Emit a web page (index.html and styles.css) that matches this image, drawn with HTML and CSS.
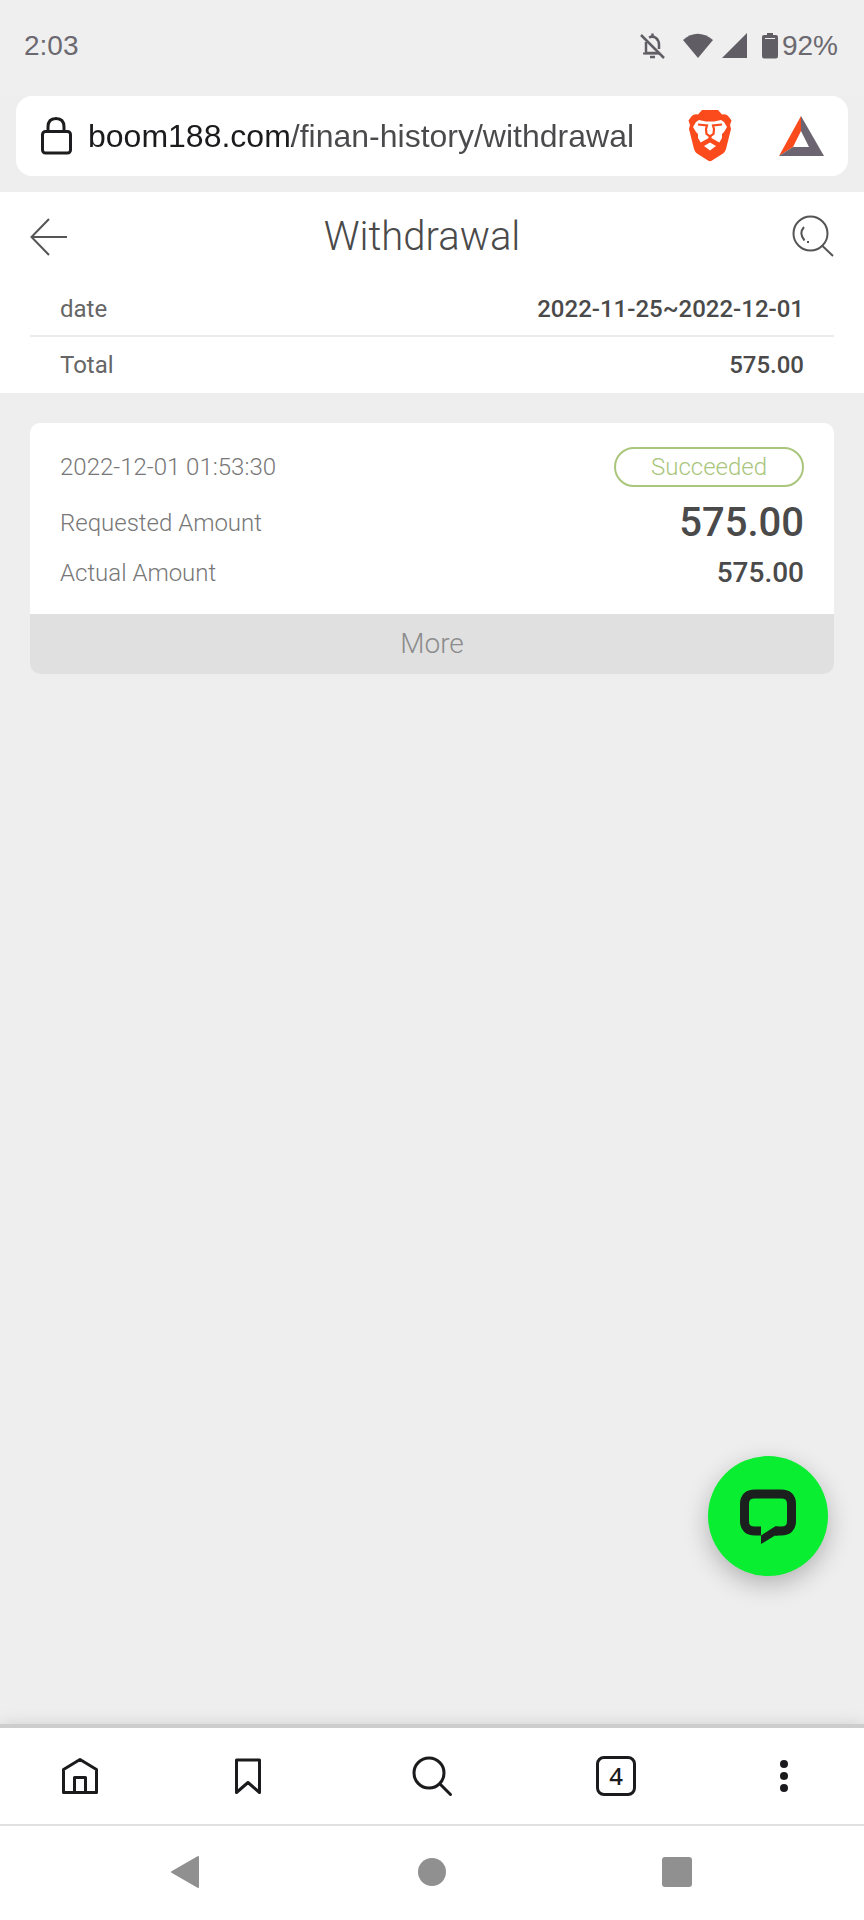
FILE: index.html
```html
<!DOCTYPE html>
<html lang="en">
<head>
  <meta charset="UTF-8" />
  <title>Withdrawal</title>
  <meta name="viewport" content="width=device-width, initial-scale=1" />
  <link rel="stylesheet" href="styles.css">
</head>
<body>
  <div class="status-bar">
    <span class="clock">2:03</span>
    <div class="status-icons">
      <svg width="44" height="28" viewBox="0 0 44 28" fill="none" stroke="#605e64" stroke-width="2.500">
        <path d="M5 3 L28 26" />
        <path d="M13 5.500 Q17 3.500 20 6 Q23 8.500 23 13 V17" />
        <path d="M10 10 V21 H23" />
        <path d="M7 21.500 H24" stroke-width="2" />
        <path d="M16.500 1.500 V5 M14 25 H19" />
      </svg>
      <svg width="36" height="28" viewBox="0 0 36 28" fill="#605e64">
        <path d="M3 8 Q17.500 -4.500 33 8 L18 26 Z" />
      </svg>
      <svg width="36" height="28" viewBox="0 0 36 28" fill="#605e64">
        <path d="M6 26 L31 1 V26 Z" />
      </svg>
      <svg width="30" height="28" viewBox="0 0 30 28" fill="#605e64">
        <path d="M15 1 H21 V3 H24 Q26 3 26 5 V24 Q26 26.500 24 26.500 H12 Q10 26.500 10 24 V5 Q10 3 12 3 H15 Z" />
        <path d="M13 6.500 H23" stroke="#efefef" />
      </svg>
      <span>92%</span>
    </div>
  </div>

  <div class="address-bar">
    <svg width="32" height="38" viewBox="0 0 32 38" fill="none" stroke="#1d1d1f" stroke-width="3">
      <rect x="2.500" y="14.500" width="28" height="21.500" rx="3" />
      <path d="M8 14 V10 Q8 1.500 16 1.500 Q24 1.500 24 10 V14" />
    </svg>
    <input class="address" type="text" value="boom188.com/finan-history/withdrawal" aria-label="Address">
    <button class="icon-btn" aria-label="Shields">
      <svg width="44" height="52" viewBox="0 0 44 52">
        <path fill="#fb4a1b" d="M14 0 H30 L34 4.500 Q39 3.500 41 7 L43.500 10.500 L42 15 L43 19 L38 39 Q37 42 35 43.500 L24 50.500 Q22 52 20 50.500 L9 43.500 Q7 42 6 39 L1 19 L2 15 L0.500 10.500 L3 7 Q5 3.500 10 4.500 Z" />
        <path fill="#fff" d="M11 10 L18 11.500 H26 L33 10 L36 12 L39 17 L36 22 L34 24 V28 L31 33 L24 30 H20 L13 33 L10 28 V24 L8 22 L5 17 L8 12 Z" />
        <path fill="#fff" d="M16 36 L22 32.500 L28 36 L22 40.500 Z" />
        <path fill="none" stroke="#fb4a1b" stroke-width="2.200" d="M10 14.500 L19 15.500 L18 19 L18.500 24 L22 26.500 L25.500 24 L26 19 L25 15.500 L34 14.500" />
        <path fill="none" stroke="#fb4a1b" stroke-width="3" d="M22 25 V29.500 M13 34 L22 29 L31 34" />
      </svg>
    </button>
    <button class="icon-btn" aria-label="Rewards">
      <svg width="46" height="42" viewBox="0 0 46 42">
        <path fill="#fb4a1b" d="M23 1 V16 L15 32 L1 41 Z" />
        <path fill="#6c6470" d="M23 1 L46 41 L31 32 L23 16 Z M1 41 L15 32 H31 L46 41 Z" />
      </svg>
    </button>
  </div>

  <main class="page">
    <header class="page-header">
      <button class="icon-btn" aria-label="Back">
        <svg width="42" height="42" viewBox="0 0 42 42" fill="none" stroke="#555" stroke-width="2">
          <path d="M37 21 H2 M19 3 L1.500 21 L19 39" />
        </svg>
      </button>
      <h1>Withdrawal</h1>
      <button class="icon-btn" aria-label="Search records">
        <svg width="42" height="42" viewBox="0 0 42 42" fill="none" stroke="#555" stroke-width="2">
          <circle cx="18.500" cy="17.500" r="17" />
          <path d="M30 29.500 L41 40 M12 11 Q6.500 17.500 12.500 24.500 M15 26 H17" />
        </svg>
      </button>
    </header>

    <dl class="summary">
      <div class="summary-row">
        <dt>date</dt>
        <dd>2022-11-25~2022-12-01</dd>
      </div>
      <div class="summary-row">
        <dt>Total</dt>
        <dd>575.00</dd>
      </div>
    </dl>

    <section class="card">
      <div class="card-body">
        <div class="card-row">
          <span>2022-12-01 01:53:30</span>
          <span class="badge">Succeeded</span>
        </div>
        <div class="card-row">
          <span>Requested Amount</span>
          <strong class="amount-lg">575.00</strong>
        </div>
        <div class="card-row">
          <span>Actual Amount</span>
          <strong class="amount">575.00</strong>
        </div>
      </div>
      <button class="more">More</button>
    </section>

    <button class="chat" aria-label="Chat">
      <svg width="56" height="56" viewBox="0 0 56 56">
        <path fill="none" stroke="#1b1f1d" stroke-width="9" d="M21 43 H15 Q4.500 43 4.500 33 V16 Q4.500 6 15 6 H41 Q51.500 6 51.500 16 V33 Q51.500 43 41 43 H35" />
        <path fill="#1b1f1d" d="M21 38.500 V56 L35 47.500 H38 V38.500 H35 L21 47.500 Z" />
      </svg>
    </button>
  </main>

  <nav class="toolbar">
    <button class="icon-btn" aria-label="Home">
      <svg width="40" height="40" viewBox="0 0 40 40" fill="none" stroke="#1b1b1d" stroke-width="3" stroke-linejoin="round">
        <path d="M3.500 13.500 L20 3.500 L36.500 13.500 V36.500 H3.500 Z M14.500 36 V21.500 H25.500 V36" />
      </svg>
    </button>
    <button class="icon-btn" aria-label="Bookmarks">
      <svg width="40" height="40" viewBox="0 0 40 40" fill="none" stroke="#1b1b1d" stroke-width="3" stroke-linejoin="round">
        <path d="M8.500 4 H31.500 V36.500 L20 26.500 L8.500 36.500 Z" />
      </svg>
    </button>
    <button class="icon-btn" aria-label="Search">
      <svg width="40" height="40" viewBox="0 0 40 40" fill="none" stroke="#1b1b1d" stroke-width="3" stroke-linecap="round">
        <circle cx="17" cy="17" r="15" />
        <path d="M28 28 L38.500 38.500" />
      </svg>
    </button>
    <button class="tab-count" aria-label="4 open tabs">4</button>
    <button class="icon-btn" aria-label="Menu">
      <svg width="8" height="40" viewBox="0 0 8 40" fill="#1b1b1d">
        <circle cx="4" cy="8" r="4" />
        <circle cx="4" cy="20" r="4" />
        <circle cx="4" cy="32" r="4" />
      </svg>
    </button>
  </nav>

  <nav class="system-nav">
    <button class="icon-btn" aria-label="System back">
      <svg width="32" height="32" viewBox="0 0 32 32" fill="#909090" stroke="#909090" stroke-width="2" stroke-linejoin="round">
        <path d="M1 15 L27 0 V30 Z" />
      </svg>
    </button>
    <button class="icon-btn" aria-label="System home">
      <svg width="32" height="32" viewBox="0 0 32 32" fill="#909090">
        <circle cx="16" cy="15" r="14" />
      </svg>
    </button>
    <button class="icon-btn" aria-label="Recent apps">
      <svg width="32" height="32" viewBox="0 0 32 32" fill="#909090">
        <rect x="1" y="0" width="30" height="30" rx="3" />
      </svg>
    </button>
  </nav>
</body>
</html>
```

FILE: styles.css
```css
:root {
  --bg: #eeeeee;
  --text: #4a4a4a;
  --text-muted: #777;
  --ink: #1b1b1d;
  --success: #a9c67c;
}

* {
  box-sizing: border-box;
  margin: 0;
  padding: 0;
}

body {
  display: flex;
  flex-direction: column;
  min-height: 100vh;
  background: var(--bg);
  color: var(--text);
  font-family: Roboto, Arial, sans-serif;
  font-size: 24px;
}

button {
  border: none;
  background: none;
  font-family: inherit;
  cursor: pointer;
}

svg {
  display: block;
  overflow: visible;
}

.icon-btn {
  display: flex;
  align-items: center;
  justify-content: center;
}

/* Phone status bar and address bar */
.status-bar {
  display: flex;
  align-items: center;
  justify-content: space-between;
  height: 96px;
  padding: 0 26px 4px 24px;
  background: #efefef;
  color: #6b696f;
  font-family: "Liberation Sans", Arial, sans-serif;
  font-size: 28px;
  line-height: 28px;
}

.status-icons {
  display: flex;
  align-items: center;
}

.address-bar {
  display: flex;
  align-items: center;
  height: 80px;
  margin: 0 16px 16px;
  padding: 0 24px;
  border-radius: 16px;
  background: #fff;
}

.address {
  flex: 1;
  min-width: 0;
  margin: 0 16px;
  border: none;
  outline: none;
  /* domain is darker than the path */
  background: linear-gradient(90deg, #1b1b1d 204px, #4a4a4c 204px);
  -webkit-background-clip: text;
  background-clip: text;
  -webkit-text-fill-color: transparent;
  font-family: "Liberation Sans", Arial, sans-serif;
  font-size: 32px;
  line-height: 40px;
}

.address-bar .icon-btn + .icon-btn {
  margin-left: 46px;
}

/* Page */
.page {
  position: relative;
  flex: 1;
}

.page-header {
  display: flex;
  align-items: center;
  justify-content: space-between;
  height: 90px;
  padding: 0 30px;
  background: #fff;
}

h1 {
  padding-right: 20px;
  font-size: 40px;
  font-weight: 300;
  line-height: 48px;
}

.summary {
  padding: 0 30px;
  background: #fff;
}

.summary-row {
  display: flex;
  align-items: center;
  justify-content: space-between;
  height: 56px;
  padding: 0 30px;
}

.summary-row:first-child {
  height: 55px;
  border-bottom: 2px solid #ececec;
}

.summary dt {
  color: #666;
}

.summary dd {
  font-weight: 500;
}

.card {
  margin: 30px;
  border-radius: 10px;
  background: #fff;
  overflow: hidden;
}

.card-body {
  display: flex;
  flex-direction: column;
  gap: 8px;
  padding: 24px 30px 27px;
}

.card-row {
  display: flex;
  align-items: center;
  justify-content: space-between;
  color: var(--text-muted);
  font-weight: 300;
  line-height: 28px;
}

.badge {
  width: 190px;
  border: 2px solid var(--success);
  border-radius: 20px;
  color: var(--success);
  line-height: 36px;
  text-align: center;
}

.amount-lg,
.amount {
  color: var(--text);
  font-weight: 500;
}

.amount-lg {
  font-size: 40px;
  line-height: 56px;
}

.amount {
  font-size: 28px;
}

.more {
  display: block;
  width: 100%;
  height: 60px;
  padding-bottom: 2px;
  background: #e0e0e0;
  color: #8c8c8c;
  font-size: 28px;
  font-weight: 300;
}

.chat {
  position: absolute;
  right: 36px;
  bottom: 148px;
  display: flex;
  align-items: center;
  justify-content: center;
  width: 120px;
  height: 120px;
  border-radius: 50%;
  background: #0aee32;
  box-shadow: 0 8px 24px rgba(0, 0, 0, 0.25);
}

/* Browser toolbar */
.toolbar {
  display: grid;
  grid-template-columns: 10fr 11fr 12fr 11fr 10fr;
  align-items: center;
  justify-items: center;
  height: 102px;
  border-top: 4px solid #cdcdcd;
  border-bottom: 2px solid #e0e0e0;
  background: #fff;
  box-shadow: 0 0 16px rgba(0, 0, 0, 0.12);
}

.tab-count {
  width: 40px;
  height: 40px;
  border: 3px solid var(--ink);
  border-radius: 8px;
  color: var(--ink);
  font-family: "Noto Sans", sans-serif;
  font-size: 24px;
  font-weight: 500;
  line-height: 32px;
}

.system-nav {
  display: grid;
  grid-template-columns: repeat(3, 1fr);
  align-items: center;
  justify-items: center;
  height: 94px;
  padding: 0 64px;
  background: #fff;
}
```
